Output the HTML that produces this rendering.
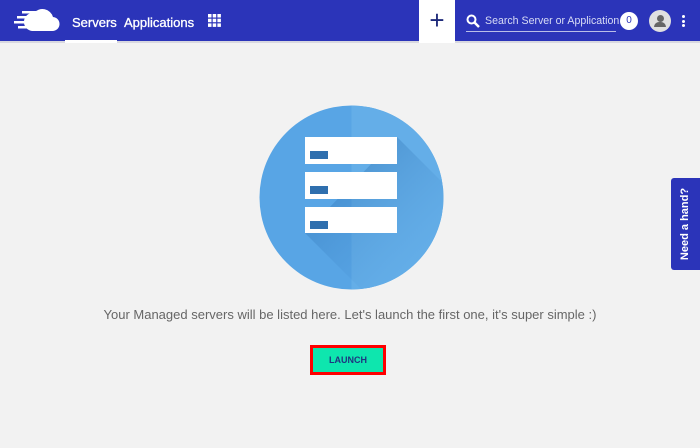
<!DOCTYPE html>
<html><head><meta charset="utf-8"><style>
*{margin:0;padding:0;box-sizing:border-box}
body{width:700px;height:448px;background:#f2f2f2;font-family:"Liberation Sans",sans-serif;position:relative;overflow:hidden}
.nav{position:absolute;left:0;top:0;width:700px;height:43px;background:#2b34b9;border-bottom:2px solid #d8d8e0}
.t{position:absolute;color:#fff;font-size:13px;top:15px;-webkit-text-stroke:0.3px #fff}
.plus{position:absolute;left:419px;top:0;width:36px;height:43px;background:#fff;color:#1e2a7a;font-size:26px;text-align:center;line-height:40px}
</style></head><body>
<div class="nav">
<svg style="position:absolute;left:14px;top:9px" width="46" height="24" viewBox="0 0 46 24"><path d="M18 22 L38 22 A7 7 0 0 0 39 8 A11 11 0 0 0 20 4 A9 9 0 0 0 18 22Z" fill="#fff"/><rect x="8" y="2" width="14" height="2.5" fill="#fff"/><rect x="3" y="7" width="16" height="2.5" fill="#fff"/><rect x="0" y="12" width="14" height="2.5" fill="#fff"/><rect x="4" y="17" width="10" height="2.5" fill="#fff"/></svg>
<div class="t" style="left:72px">Servers</div>
<div style="position:absolute;left:65px;top:40px;width:52px;height:3px;background:#fff"></div>
<div class="t" style="left:124px">Applications</div>
<svg style="position:absolute;left:208px;top:14px" width="13" height="13"><g fill="#fff"><rect x="0" y="0" width="3.5" height="3.5"/><rect x="4.7" y="0" width="3.5" height="3.5"/><rect x="9.4" y="0" width="3.5" height="3.5"/><rect x="0" y="4.7" width="3.5" height="3.5"/><rect x="4.7" y="4.7" width="3.5" height="3.5"/><rect x="9.4" y="4.7" width="3.5" height="3.5"/><rect x="0" y="9.4" width="3.5" height="3.5"/><rect x="4.7" y="9.4" width="3.5" height="3.5"/><rect x="9.4" y="9.4" width="3.5" height="3.5"/></g></svg>
<div class="plus">+</div>
<svg style="position:absolute;left:466px;top:14px" width="14" height="14"><circle cx="5.5" cy="5.5" r="4" stroke="#fff" stroke-width="2" fill="none"/><path d="M8.5 8.5 L13 13" stroke="#fff" stroke-width="2.5"/></svg>
<div style="position:absolute;left:485px;top:15px;color:#d8dcf5;font-size:10.6px;white-space:nowrap">Search Server or Application</div>
<div style="position:absolute;left:466px;top:31px;width:150px;height:1px;background:#b9bde8"></div>
<div style="position:absolute;left:620px;top:12px;width:18px;height:18px;border-radius:50%;background:#fff;color:#2b34b9;font-size:10px;text-align:center;line-height:18px">0</div>
<div style="position:absolute;left:649px;top:10px;width:22px;height:22px;border-radius:50%;background:#e0e0e0;overflow:hidden"><div style="position:absolute;left:7.5px;top:5px;width:7px;height:7px;border-radius:50%;background:#666"></div><div style="position:absolute;left:5px;top:12px;width:12px;height:5px;border-radius:5px 5px 0 0;background:#666"></div></div>
<div style="position:absolute;left:682px;top:15px;width:3px"><div style="width:3px;height:3px;background:#fff;border-radius:50%;margin-bottom:1.5px"></div><div style="width:3px;height:3px;background:#fff;border-radius:50%;margin-bottom:1.5px"></div><div style="width:3px;height:3px;background:#fff;border-radius:50%"></div></div>
</div>
<svg style="position:absolute;left:259px;top:105px" width="185" height="185" viewBox="0 0 185 185">
<defs><clipPath id="c"><circle cx="92.5" cy="92.5" r="92"/></clipPath><linearGradient id="g" x1="0" y1="0" x2="1" y2="1"><stop offset="0" stop-color="#1f5f9e" stop-opacity=".55"/><stop offset=".6" stop-color="#4a93d6" stop-opacity="0"/></linearGradient></defs>
<circle cx="92.5" cy="92.5" r="92" fill="#58a5e5"/>
<g clip-path="url(#c)"><rect x="92.5" y="0" width="93" height="185" fill="#64aee8"/>
<path d="M46 128 L138 32 L250 144 L158 240Z" fill="url(#g)"/></g>
<g fill="#fff"><rect x="46" y="32" width="92" height="27"/><rect x="46" y="67" width="92" height="27"/><rect x="46" y="102" width="92" height="26"/></g>
<g fill="#2f6fae"><rect x="51" y="46" width="18" height="8"/><rect x="51" y="81" width="18" height="8"/><rect x="51" y="116" width="18" height="8"/></g>
</svg>
<div style="position:absolute;left:0;width:700px;top:307px;text-align:center;color:#666;font-size:13px">Your Managed servers will be listed here. Let's launch the first one, it's super simple :)</div>
<div style="position:absolute;left:310px;top:345px;width:76px;height:30px;border:3px solid #f00;background:#0ee6ae;color:#1f3580;font-size:9px;font-weight:bold;text-align:center;line-height:24px">LAUNCH</div>
<div style="position:absolute;left:671px;top:178px;width:29px;height:92px;background:#2b34b9;border-radius:3px 0 0 3px"><div style="position:absolute;left:14px;top:46px;transform:translate(-50%,-50%) rotate(-90deg);color:#fff;font-size:11px;font-weight:bold;white-space:nowrap">Need a hand?</div></div>
</body></html>
